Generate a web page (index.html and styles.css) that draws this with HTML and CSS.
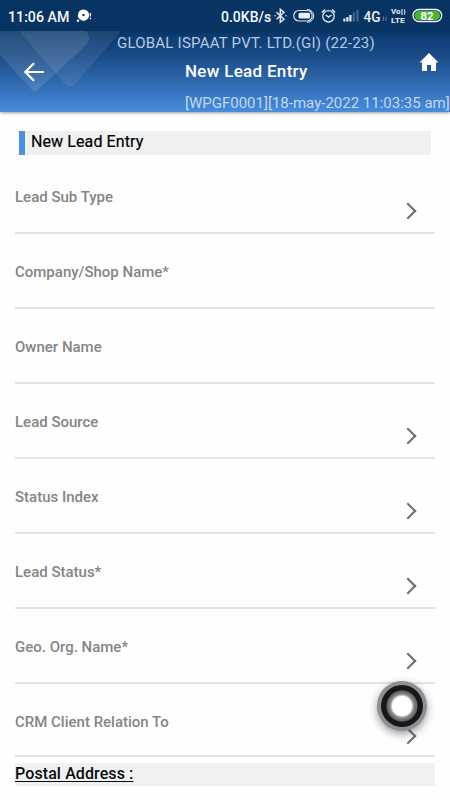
FILE: index.html
```html
<!DOCTYPE html>
<html lang="en">
<head>
<meta charset="utf-8">
<title>New Lead Entry</title>
<link rel="stylesheet" href="styles.css">
</head>
<body>
<div class="screen">
  <header class="top">
    <svg class="pattern" width="130" height="81" viewBox="0 0 130 81">
      <path d="M0 0H86Q92 7 87 13L39 58Q35 62 31 58L0 24Z" fill="#fff" fill-opacity=".11"/>
      <path d="M22 0H121L75 53Q70 58 65 53L23 5Q20 2 22 0Z" fill="#fff" fill-opacity=".08"/>
    </svg>
    <div class="status">
      <span class="clock">11:06 AM</span>
      <svg class="chat" width="17" height="16" viewBox="0 0 17 16">
        <path d="M7.500 1.500a5.600 5.600 0 1 1-1.400 11L3.500 11A5.600 5.600 0 0 1 7.500 1.500Z" fill="#fff"/>
        <circle cx="7.500" cy="7" r="1.200" fill="#0a3568"/>
        <circle cx="2" cy="12.800" r="1.200" fill="#fff"/>
        <path d="M14.400 5v3.500M14.400 9.700v1.500" stroke="#fff" stroke-width="1.300"/>
      </svg>
      <span class="speed">0.0KB/s</span>
      <svg class="tray" width="176" height="20" viewBox="272 6 176 20" fill="none" stroke="#dfe9f6">
        <path d="M276.500 12.300L284 19.300L280.300 22.300V9.300L284 12.300L276.500 19.300" stroke-width="1.500"/>
        <path d="M275 15.800h.1M286 15.800h.1" stroke-width="1.500" stroke-linecap="round"/>
        <path d="M299 10.500h8a5.200 5.200 0 0 1 0 10.500h-8a5.200 5.200 0 0 1 0-10.500Z" stroke-width="1.200"/>
        <path d="M307 9.500c9 0 9 12.700 0 12.700" stroke-width="1"/>
        <rect x="298.500" y="12.800" width="11.500" height="5.800" rx="1.500" fill="#e8f0fb" stroke="none"/>
        <circle cx="328.500" cy="16.300" r="5.700" stroke-width="1.300"/>
        <path d="M321.800 12.500l3.200-3M335.200 12.500l-3.200-3M325.800 15l2.700 2 3-2" stroke-width="1.500"/>
        <path d="M344.400 21.500v-3M347.400 21.500v-4.500M350.400 21.500v-6.500" stroke-width="2.200"/>
        <path d="M353.800 21.500v-9M357.500 21.500v-11.500" stroke-width="2" stroke="#4c6b92"/>
        <text x="363.500" y="21.700" class="net" textLength="17" lengthAdjust="spacingAndGlyphs">4G</text>
        <path d="M383.300 16.500v4.500M386 16.500v4.500" stroke="#6380a3" stroke-width="1"/>
        <text x="391" y="14.300" class="volte" textLength="9.500" lengthAdjust="spacingAndGlyphs">Vo</text>
        <path d="M402 9v6M404.200 9.500q1.500 2.500 0 5" stroke-width="1.100"/>
        <text x="391" y="22.700" class="volte" textLength="14" lengthAdjust="spacingAndGlyphs">LTE</text>
        <rect x="413" y="9.500" width="28.700" height="12" rx="6" stroke="#f3f8fc" stroke-width="1.300"/>
        <path d="M419 11h16.500a4.500 4.500 0 0 1 0 9H419a4.500 4.500 0 0 1 0-9Z" fill="#48b72e" stroke="none"/>
        <text x="420.500" y="19.500" class="battery" textLength="13" lengthAdjust="spacingAndGlyphs">82</text>
      </svg>
    </div>
    <div class="appbar">
      <svg class="back" width="22" height="20" viewBox="0 0 22 20"><path d="M21 10H3M11 1.300L2.300 10L11 18.700" fill="none" stroke="#fff" stroke-width="2.200"/></svg>
      <div class="company">GLOBAL ISPAAT PVT. LTD.(GI) (22-23)</div>
      <h1>New Lead Entry</h1>
      <div class="session">[WPGF0001][18-may-2022 11:03:35 am]</div>
      <svg class="home" width="20" height="19" viewBox="0 0 20 19"><path d="M10 0L19.500 9.500H17V18H12V12H8V18H3V9.500H.5Z" fill="#fff"/></svg>
    </div>
  </header>
  <main>
    <h2 class="section">New Lead Entry</h2>
    <div class="field select"><label>Lead Sub Type</label></div>
    <div class="field"><label>Company/Shop Name*</label></div>
    <div class="field"><label>Owner Name</label></div>
    <div class="field select"><label>Lead Source</label></div>
    <div class="field select"><label>Status Index</label></div>
    <div class="field select"><label>Lead Status*</label></div>
    <div class="field select"><label>Geo. Org. Name*</label></div>
    <div class="field select last"><label>CRM Client Relation To</label></div>
    <h3 class="postal">Postal Address :</h3>
  </main>
  <div class="touch"><div class="disc"></div></div>
</div>
</body>
</html>
```
FILE: styles.css
```css
* { box-sizing: border-box; }
body { margin: 0; font-family: Roboto, "Liberation Sans", sans-serif; background: #fefefe; }
.screen { position: relative; width: 450px; height: 800px; overflow: hidden; }
.top {
  position: relative;
  height: 112px;
  background: linear-gradient(#083463 0, #083463 31px, #0c3c72 36px, #1a4a86 55px, #2f68ae 82px, #488cdd 112px);
  box-shadow: 0 1px 3px rgba(0, 0, 0, .4);
}
.pattern { position: absolute; left: 0; top: 31px; }
.status { position: relative; height: 31px; display: flex; align-items: center; color: #f4f8fd; }
.clock { margin: 2px 0 0 8px; font-size: 14.2px; font-weight: 500; line-height: 20px; width: 62px; white-space: nowrap; }
.chat { flex: none; margin-left: 6px; }
.speed { margin: 2px 0 0 128px; font-size: 14px; font-weight: 500; line-height: 20px; width: 51px; white-space: nowrap; }
.tray { flex: none; margin-top: 1px; }
.tray text { fill: #e9f0f9; stroke: none; font-weight: 500; }
.tray .net { font-size: 14.5px; }
.tray .volte { font-size: 7.8px; font-weight: 700; }
.tray .battery { font-size: 10.5px; font-weight: 700; fill: #fff; }
.appbar {
  position: relative;
  height: 81px;
  display: grid;
  grid-template-columns: 117px 68px 1fr 31px;
  grid-template-rows: 24px 33px 24px;
  color: #fff;
}
.back { grid-column: 1; grid-row: 2; margin: 6.5px 0 0 23px; }
.company { grid-column: 2 / 4; grid-row: 1; font-size: 15px; letter-spacing: .22px; line-height: 24px; color: #b6cae4; white-space: nowrap; }
h1 { grid-column: 3; grid-row: 2; margin: 0; font-size: 17px; letter-spacing: .3px; font-weight: 500; line-height: 33px; white-space: nowrap; }
.session { grid-column: 3 / 5; grid-row: 3; padding-top: 3px; font-size: 15px; line-height: 24px; color: #c1d9f4; white-space: nowrap; }
.home { grid-column: 4; grid-row: 1 / 3; margin: 22px 0 0 0; }
.section {
  margin: 19px 19px 4px 19px;
  height: 24px;
  padding-left: 6px;
  border-left: 6px solid #4a90e2;
  background: #eff0f2;
  color: #000;
  font-size: 16px;
  font-weight: 400;
  letter-spacing: .1px;
  line-height: 22px;
  -webkit-text-stroke: .2px #000;
}
.field {
  position: relative;
  height: 75px;
  margin: 0 15px;
  padding-top: 27px;
  border-bottom: 2px solid #e3e3e3;
}
.field label { display: block; font-size: 15px; font-weight: 500; line-height: 22px; color: #858585; }
.field.select::after {
  content: "";
  position: absolute;
  right: 21px;
  top: 46px;
  width: 10px;
  height: 10px;
  border: solid #6e6e72;
  border-width: 2px 2px 0 0;
  transform: rotate(45deg);
}
.field.last { height: 73px; }
.postal {
  margin: 6px 15px 0;
  height: 23px;
  background: #f0f1f3;
  color: #0a0a0a;
  font-size: 16px;
  font-weight: 500;
  letter-spacing: .1px;
  line-height: 21px;
  text-decoration: underline;
  text-decoration-thickness: 1px;
  text-underline-offset: 2px;
}
.touch {
  position: absolute;
  left: 377px;
  top: 681px;
  width: 50px;
  height: 50px;
  padding: 4px;
  border-radius: 50%;
  background: #8b8f96;
  box-shadow: 0 3px 8px rgba(0, 0, 0, .4);
}
.disc {
  height: 42px;
  border-radius: 50%;
  background: radial-gradient(circle, #fff 0, #fff 9.500px, #ccc 10.500px, #999 11.500px, #777 13px, #666 15px, #171717 16px, #171717 21px);
}
```
